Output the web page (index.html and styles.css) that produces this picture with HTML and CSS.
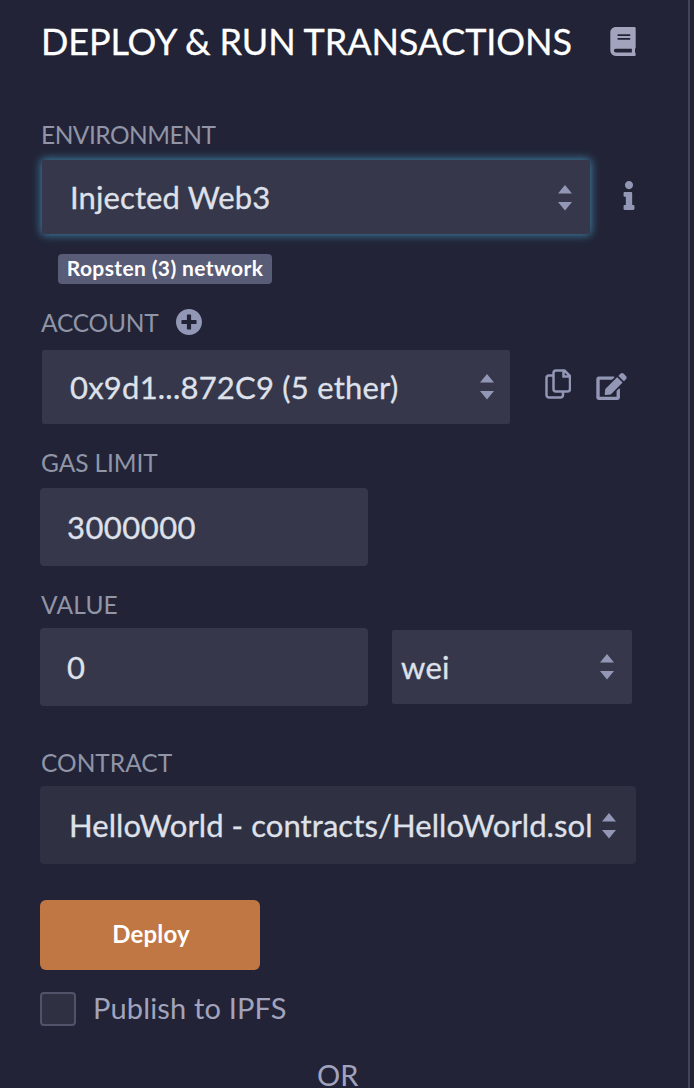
FILE: index.html
```html
<!DOCTYPE html>
<html lang="en">
<head>
<meta charset="utf-8">
<title>Deploy &amp; Run Transactions</title>
<link rel="stylesheet" href="styles.css">
</head>
<body>
<main class="panel">
  <header class="header">
    <h1 class="title">DEPLOY &amp; RUN TRANSACTIONS</h1>
    <svg class="icon-book" viewBox="0 0 448 512"><path d="M448 360V24c0-13.3-10.7-24-24-24H96C43 0 0 43 0 96v320c0 53 43 96 96 96h328c13.3 0 24-10.7 24-24v-16c0-7.5-3.5-14.3-8.9-18.7-4.2-15.4-4.2-59.3 0-74.7 5.4-4.3 8.9-11.1 8.9-18.6zM128 134c0-3.3 2.7-6 6-6h212c3.3 0 6 2.7 6 6v20c0 3.3-2.7 6-6 6H134c-3.3 0-6-2.7-6-6v-20zm0 64c0-3.3 2.7-6 6-6h212c3.3 0 6 2.7 6 6v20c0 3.3-2.7 6-6 6H134c-3.3 0-6-2.7-6-6v-20zm253.400 250H96c-17.700 0-32-14.300-32-32 0-17.600 14.400-32 32-32h285.400c-1.900 17.100-1.900 46.900 0 64z"/></svg>
  </header>

  <section class="field environment">
    <div class="label"><span class="t-env">ENVIRONMENT</span></div>
    <div class="row">
      <div class="select select-env focused"><span class="t-injected">Injected Web3</span><svg class="arrows" viewBox="0 0 14 26"><path d="M7 0l7 8.500H0zM7 25.500l7-8.500H0z"/></svg></div>
      <svg class="icon-info" viewBox="0 0 192 512"><path d="M20 424.229h20V279.771H20c-11.046 0-20-8.954-20-20V212c0-11.046 8.954-20 20-20h112c11.046 0 20 8.954 20 20v212.229h20c11.046 0 20 8.954 20 20V492c0 11.046-8.954 20-20 20H20c-11.046 0-20-8.954-20-20v-47.771c0-11.046 8.954-20 20-20zM96 0C56.235 0 24 32.235 24 72s32.235 72 72 72 72-32.235 72-72S135.764 0 96 0z"/></svg>
    </div>
    <div class="badge">Ropsten (3) network</div>
  </section>

  <section class="field account">
    <div class="label"><span class="t-account">ACCOUNT</span><svg class="icon-plus" viewBox="8 8 496 496"><path d="M256 8C119 8 8 119 8 256s111 248 248 248 248-111 248-248S393 8 256 8zm144 276c0 6.600-5.400 12-12 12h-92v92c0 6.600-5.400 12-12 12h-56c-6.600 0-12-5.400-12-12v-92h-92c-6.600 0-12-5.400-12-12v-56c0-6.600 5.400-12 12-12h92v-92c0-6.600 5.400-12 12-12h56c6.600 0 12 5.400 12 12v92h92c6.600 0 12 5.400 12 12v56z"/></svg></div>
    <div class="row">
      <div class="select select-account"><span class="t-address">0x9d1...872C9 (5 ether)</span><svg class="arrows" viewBox="0 0 14 26"><path d="M7 0l7 8.500H0zM7 25.500l7-8.500H0z"/></svg></div>
      <svg class="icon-copy" viewBox="0 0 26 30"><path d="M8.500 6.500H4a2.500 2.500 0 0 0-2.500 2.500v17A2.500 2.500 0 0 0 4 28.500h11.500A2.500 2.500 0 0 0 18 26v-3M11 1.500h8.500L25 7v13a2.500 2.500 0 0 1-2.500 2.500H11A2.500 2.500 0 0 1 8.500 20V4A2.500 2.500 0 0 1 11 1.500zM18.500 2v5.500H24"/></svg>
      <svg class="icon-edit" viewBox="0 0 576 512"><path d="M402.600 83.200l90.200 90.200c3.800 3.800 3.800 10 0 13.800L274.400 405.600l-92.800 10.300c-12.400 1.400-22.900-9.100-21.500-21.500l10.300-92.800L388.800 83.200c3.800-3.800 10-3.800 13.800 0zm162-22.900l-48.800-48.800c-15.200-15.200-39.900-15.200-55.200 0l-35.400 35.400c-3.800 3.800-3.800 10 0 13.800l90.200 90.200c3.800 3.800 10 3.800 13.800 0l35.400-35.400c15.200-15.300 15.200-40 0-55.200zM384 346.200V448H64V128h229.800c3.200 0 6.200-1.300 8.500-3.500l40-40c7.600-7.600 2.200-20.500-8.500-20.500H48C21.500 64 0 85.500 0 112v352c0 26.500 21.500 48 48 48h352c26.500 0 48-21.500 48-48V306.200c0-10.700-12.900-16-20.500-8.500l-40 40c-2.200 2.300-3.500 5.300-3.500 8.500z"/></svg>
    </div>
  </section>

  <section class="field gas">
    <div class="label"><span class="t-gas">GAS LIMIT</span></div>
    <div class="input"><span class="t-number">3000000</span></div>
  </section>

  <section class="field value">
    <div class="label"><span class="t-value">VALUE</span></div>
    <div class="row">
      <div class="input"><span class="t-number">0</span></div>
      <div class="select select-unit"><span class="t-wei">wei</span><svg class="arrows" viewBox="0 0 14 26"><path d="M7 0l7 8.500H0zM7 25.500l7-8.500H0z"/></svg></div>
    </div>
  </section>

  <section class="field contract">
    <div class="label"><span class="t-contract">CONTRACT</span></div>
    <div class="select select-contract"><span class="t-file">HelloWorld - contracts/HelloWorld.sol</span><svg class="arrows" viewBox="0 0 14 26"><path d="M7 0l7 8.500H0zM7 25.500l7-8.500H0z"/></svg></div>
  </section>

  <div class="deploy">Deploy</div>
  <div class="publish"><span class="checkbox"></span><span class="t-publish">Publish to IPFS</span></div>
  <div class="or">OR</div>
</main>
</body>
</html>
```
FILE: styles.css
```css
* { box-sizing: border-box; }
body {
  margin: 0;
  height: 1088px;
  overflow: hidden;
  background: #222336;
  font-family: Lato, "Open Sans", sans-serif;
  color: #dfe1ea;
}
.panel {
  width: 690px;
  height: 1088px;
  padding: 18px 0 0 40px;
  border-right: 2px solid #444458;
  white-space: nowrap;
}
svg { display: block; flex: none; fill: #9297b5; }
.row { display: flex; }

.header { display: flex; height: 48px; }
.title {
  width: 570px;
  margin: 0;
  padding-left: 1px;
  font-size: 36px;
  font-weight: 400;
  line-height: 47px;
  letter-spacing: -0.12px;
  color: #fff;
  -webkit-text-stroke: 0.3px #fff;
}
.icon-book { width: 26px; height: 29px; margin-top: 9px; fill: #a2a3bd; }

.label {
  display: flex;
  height: 32px;
  padding-left: 1px;
  font-size: 24.5px;
  line-height: 31px;
  color: #9095a8;
}
.t-env { letter-spacing: -0.5px; }
.t-account { width: 117px; letter-spacing: -0.2px; }
.t-gas { letter-spacing: -0.1px; }
.t-value { letter-spacing: 0.2px; }
.environment { margin-top: 53px; }
.environment .row { margin-top: 9px; }
.account { margin-top: 23px; }
.account .row { margin-top: 11px; }
.gas { margin-top: 23px; }
.gas .input { margin-top: 9px; }
.value { margin-top: 23px; }
.value .row { margin-top: 7px; }
.contract { margin-top: 41px; }
.contract .select { margin-top: 7px; }

.select, .input {
  display: flex;
  align-items: center;
  background: #36374a;
  font-size: 31px;
  -webkit-text-stroke: 0.3px #dfe1ea;
}
.select { height: 74px; border-radius: 2px; justify-content: space-between; }
.select span, .input span { margin-bottom: 1px; }
.input { width: 328px; height: 78px; padding-left: 27px; border-radius: 4px; }
.arrows { width: 14px; height: 26px; }
.t-injected { letter-spacing: 0.12px; }
.t-address { letter-spacing: 0.22px; }
.t-number { letter-spacing: 0.45px; }
.t-wei { letter-spacing: 0.3px; }
.t-file { letter-spacing: 0.07px; }
.select-env { width: 548px; margin-left: 2px; padding: 0 18px 0 28px; }
.select-env .arrows, .select-contract .arrows { margin-top: 2px; }
.focused { box-shadow: 0 0 10px 1px #3f83a8; }
.icon-info { width: 12px; height: 29px; margin: 21px 0 0 33px; }
.badge {
  width: 214px;
  height: 30px;
  margin: 20px 0 0 18px;
  border-radius: 4px;
  background: #595c76;
  color: #fff;
  font-size: 21px;
  font-weight: 700;
  line-height: 28px;
  letter-spacing: 0.38px;
  text-align: center;
}
.icon-plus { width: 26px; height: 26px; margin: 2px 0 0 18px; }
.select-account { width: 468px; margin-left: 2px; padding: 0 16px 0 28px; }
.icon-copy { width: 26px; height: 30px; margin: 19px 0 0 35px; fill: none; stroke: #9297b5; stroke-width: 2.5; }
.icon-edit { width: 31px; height: 27px; margin: 23px 0 0 25px; }
.select-unit { width: 240px; margin: 2px 0 0 24px; padding: 0 18px 0 9px; }
.select-contract { width: 596px; height: 78px; padding: 0 20px 0 29px; border-radius: 4px; background: #2f3042; }

.deploy {
  width: 220px;
  height: 70px;
  margin-top: 36px;
  padding-left: 2px;
  border-radius: 6px;
  background: #c07744;
  color: #fff;
  font-size: 24px;
  font-weight: 700;
  line-height: 67px;
  letter-spacing: 0.15px;
  text-align: center;
}
.publish { display: flex; align-items: center; height: 34px; margin-top: 22px; font-size: 29px; color: #a2a3bd; }
.t-publish { margin-bottom: 4px; letter-spacing: 0.17px; }
.checkbox { width: 36px; height: 34px; margin-right: 17px; border: 2px solid #51536a; border-radius: 4px; background: #2f3042; }
.or { height: 26px; margin-top: 36px; padding-left: 277px; font-size: 29px; line-height: 26px; color: #a2a3bd; }
```
